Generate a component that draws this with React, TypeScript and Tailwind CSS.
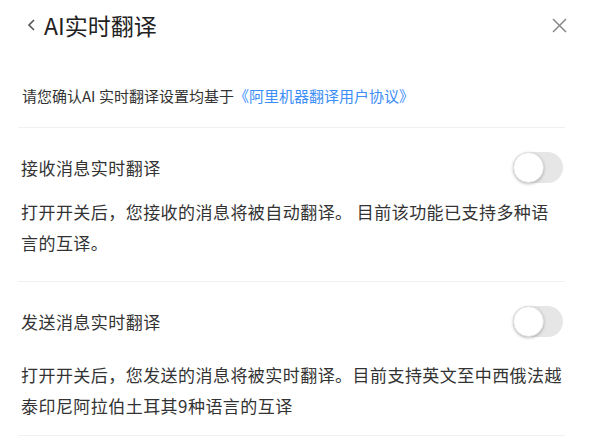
import React, { useState } from "react";

const font = { fontFamily: '"Noto Sans CJK SC", "Noto Sans", sans-serif' };

function Toggle({ on, onChange }: { on: boolean; onChange: () => void }) {
  return (
    <button
      onClick={onChange}
      className={`relative w-[50px] h-[31px] rounded-full shrink-0 ${on ? "bg-[#3d8ef8]" : "bg-[#e6e6e6]"}`}
    >
      <span
        className={`absolute top-0 w-[31px] h-[31px] rounded-full bg-white border border-[#e2e2e2] shadow-[0_1px_3px_rgba(0,0,0,0.25)] ${on ? "left-[19px]" : "left-0"}`}
      ></span>
    </button>
  );
}

function Section({
  label,
  lines,
  box,
  mt,
}: {
  label: string;
  lines: string[];
  box: string;
  mt: string;
}) {
  const [on, setOn] = useState(false);
  return (
    <div className={`${box} border-b border-[#f0f0f0]`}>
      <div className="flex items-center justify-between pl-[3px] pr-[2px]">
        <span className="text-[17px] tracking-[0.45px] text-[#333]">{label}</span>
        <Toggle on={on} onChange={() => setOn(!on)} />
      </div>
      <p className={`${mt} pl-[3px] text-[17px] tracking-[0.45px] leading-[31px] text-[#333]`}>
        {lines[0]}
        <br />
        {lines[1]}
      </p>
    </div>
  );
}

export default function App() {
  return (
    <div className="w-[589px] h-[444px] bg-white overflow-hidden" style={font}>
      {/* header */}
      <div className="h-[50px] flex items-center pl-[27px] pr-[22px]">
        <svg width="9" height="14" viewBox="0 0 9 14" className="mr-[8px]">
          <path d="M7 2 L2 7 L7 12" fill="none" stroke="#555" strokeWidth="1.6" />
        </svg>
        <h1 className="text-[23px] text-[#222] leading-none">AI实时翻译</h1>
        <svg width="15" height="15" viewBox="0 0 15 15" className="ml-auto">
          <path d="M1 1 L14 14 M14 1 L1 14" stroke="#888" strokeWidth="1.5" />
        </svg>
      </div>

      <div className="pl-[18px] pr-[24px]">
        <div className="pt-[35px] pb-[20px] border-b border-[#f0f0f0]">
          <p className="pl-[4px] text-[15px] leading-[22px] text-[#333]">
            请您确认AI 实时翻译设置均基于
            <a className="text-[#3d8ef8]">《阿里机器翻译用户协议》</a>
          </p>
        </div>
        <Section
          label="接收消息实时翻译"
          lines={["打开开关后，您接收的消息将被自动翻译。 目前该功能已支持多种语", "言的互译。"]}
          box="pt-[24px] pb-[23px]"
          mt="mt-[13px]"
        />
        <Section
          label="发送消息实时翻译"
          lines={["打开开关后，您发送的消息将被实时翻译。目前支持英文至中西俄法越", "泰印尼阿拉伯土耳其9种语言的互译"]}
          box="pt-[24px] pb-[14px]"
          mt="mt-[22px]"
        />
      </div>
    </div>
  );
}
